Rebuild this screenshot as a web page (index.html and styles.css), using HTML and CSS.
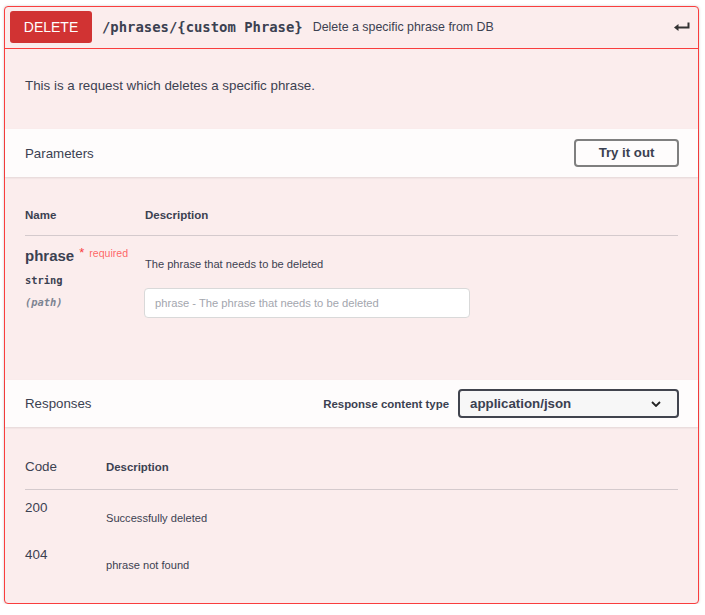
FILE: index.html
```html
<!DOCTYPE html>
<html>
<head>
<meta charset="utf-8">
<link rel="stylesheet" href="styles.css">
</head>
<body>
<div class="opblock">
  <div class="summary">
    <span class="method">DELETE</span>
    <span class="path">/phrases/{custom Phrase}</span>
    <span class="summary-desc">Delete a specific phrase from DB</span>
    <svg class="enter" width="16" height="10" viewBox="0 0 16 10">
      <path d="M14.5 0.5 V5.5 H3.5" fill="none" stroke="#333" stroke-width="2"/>
      <path d="M0 5.5 L4.5 2 V9 Z" fill="#333"/>
    </svg>
  </div>
  <div class="body">
    <div class="desc">This is a request which deletes a specific phrase.</div>
    <div class="section-header">
      <span class="sh-title">Parameters</span>
      <button class="try-btn">Try it out</button>
    </div>
    <div class="params">
      <div class="phead">
        <div class="col-name">Name</div>
        <div class="col-desc">Description</div>
      </div>
      <div class="prow">
        <div class="col-name">
          <div class="pname">phrase<span class="star">*</span><span class="req">required</span></div>
          <div class="ptype">string</div>
          <div class="pin">(path)</div>
        </div>
        <div class="col-desc">
          <div class="pdesc">The phrase that needs to be deleted</div>
          <input class="pinput" type="text" placeholder="phrase - The phrase that needs to be deleted">
        </div>
      </div>
    </div>
    <div class="section-header resp-header">
      <span class="sh-title">Responses</span>
      <div class="ctype">
        <span class="ctype-label">Response content type</span>
        <div class="select">
          <span>application/json</span>
          <svg width="10" height="6" viewBox="0 0 10 6"><path d="M1 1 L5 5 L9 1" fill="none" stroke="#222" stroke-width="1.8"/></svg>
        </div>
      </div>
    </div>
    <div class="responses">
      <div class="rhead">
        <div class="rcode">Code</div>
        <div class="rdesc-h">Description</div>
      </div>
      <div class="rrow">
        <div class="rcode">200</div>
        <div class="rdesc">Successfully deleted</div>
      </div>
      <div class="rrow">
        <div class="rcode">404</div>
        <div class="rdesc">phrase not found</div>
      </div>
    </div>
  </div>
</div>
</body>
</html>
```
FILE: styles.css
```css
* { box-sizing: border-box; }
body {
  margin: 0;
  padding: 6px 6px 0 4px;
  background: #fff;
  font-family: "Liberation Sans", Arial, sans-serif;
  color: #3b4151;
}
.opblock {
  border: 1px solid #f93e3e;
  border-radius: 4px;
  background: #fbeded;
  box-shadow: 0 0 3px rgba(0,0,0,.19);
}
.summary {
  display: flex;
  align-items: center;
  padding: 4px 5px 5px;
  border-bottom: 1px solid #f93e3e;
}
.method {
  width: 82px;
  height: 32px;
  display: flex;
  align-items: center;
  justify-content: center;
  background: #d13333;
  color: #fff;
  border-radius: 3px;
  font-size: 14px;
}
.path {
  font-family: "DejaVu Sans Mono", monospace;
  font-weight: 700;
  font-size: 13.9px;
  padding: 0 10px;
  color: #3b4151;
}
.summary-desc {
  font-size: 12.4px;
  color: #3b4151;
}
.enter { margin-left: auto; margin-right: 3px; }
.desc {
  padding: 27px 20px 33px;
  font-size: 13.35px;
  line-height: 20px;
}
.section-header {
  min-height: 48px;
  padding: 0 19px 0 20px;
  display: flex;
  align-items: center;
  justify-content: space-between;
  background: rgba(255,255,255,.8);
  box-shadow: 0 1px 2px rgba(0,0,0,.1);
}
.sh-title { font-size: 13.3px; }
.try-btn {
  width: 105px;
  height: 28px;
  border: 2px solid #7f7f7f;
  border-radius: 4px;
  background: transparent;
  font-family: "Liberation Sans", Arial, sans-serif;
  font-weight: 700;
  font-size: 13.2px;
  color: #3b4151;
  padding: 0;
  margin-bottom: 1px;
}
.params { padding: 0 20px 62px; }
.phead {
  display: flex;
  padding: 30px 0 12px;
  border-bottom: 1px solid rgba(59,65,81,.2);
  font-size: 11.5px;
  font-weight: 700;
  line-height: 16px;
}
.col-name { width: 120px; flex: none; }
.col-desc { flex: 1; }
.prow { display: flex; }
.prow .col-name { padding-top: 10px; }
.prow .col-desc { padding-top: 20px; margin-left: -1px; }
.pname {
  display: flex;
  align-items: flex-start;
  font-size: 15px;
  font-weight: 700;
  line-height: 20px;
}
.star {
  color: #f93e3e;
  font-size: 13px;
  font-weight: 400;
  line-height: 14px;
  margin-left: 5px;
}
.req {
  color: rgba(255,0,0,.6);
  font-size: 10.6px;
  font-weight: 400;
  line-height: 14px;
  margin-left: 5px;
}
.ptype {
  margin-top: 6px;
  font-family: "DejaVu Sans Mono", monospace;
  font-size: 10.4px;
  font-weight: 700;
  line-height: 16px;
}
.pin {
  margin-top: 6px;
  font-family: "DejaVu Sans Mono", monospace;
  font-size: 10.4px;
  font-style: italic;
  font-weight: 700;
  line-height: 16px;
  color: #7d8492;
}
.pdesc {
  font-size: 11.1px;
  line-height: 16px;
  padding-left: 1px;
}
.pinput {
  display: block;
  margin-top: 16px;
  width: 326px;
  height: 30px;
  border: 1px solid #d9d9d9;
  border-radius: 4px;
  background: #fff;
  padding: 0 10px;
  font-family: "Liberation Sans", Arial, sans-serif;
  font-size: 11.2px;
  outline: none;
}
.pinput::placeholder { color: #a3a6ae; }
.resp-header { min-height: 47px; }
.ctype { display: flex; align-items: center; }
.ctype-label {
  font-size: 11.45px;
  font-weight: 700;
  margin-right: 9px;
}
.select {
  width: 221px;
  height: 29px;
  border: 2px solid #41444e;
  border-radius: 4px;
  background: #f7f7f7;
  display: flex;
  align-items: center;
  justify-content: space-between;
  padding: 0 16px 0 10px;
  font-size: 13.3px;
  font-weight: 700;
}
.responses { padding: 0 20px 19px; }
.rhead {
  display: flex;
  align-items: center;
  padding: 30px 0 12px;
  border-bottom: 1px solid rgba(59,65,81,.2);
}
.rcode {
  width: 81px;
  flex: none;
  font-size: 13.4px;
  line-height: 20px;
}
.rdesc-h {
  font-size: 11.4px;
  font-weight: 700;
  line-height: 16px;
}
.rrow {
  display: flex;
  align-items: flex-start;
}
.rrow .rcode { padding-top: 8px; }
.rdesc {
  padding: 20px 0 11px;
  font-size: 11.1px;
  line-height: 16px;
}
```
